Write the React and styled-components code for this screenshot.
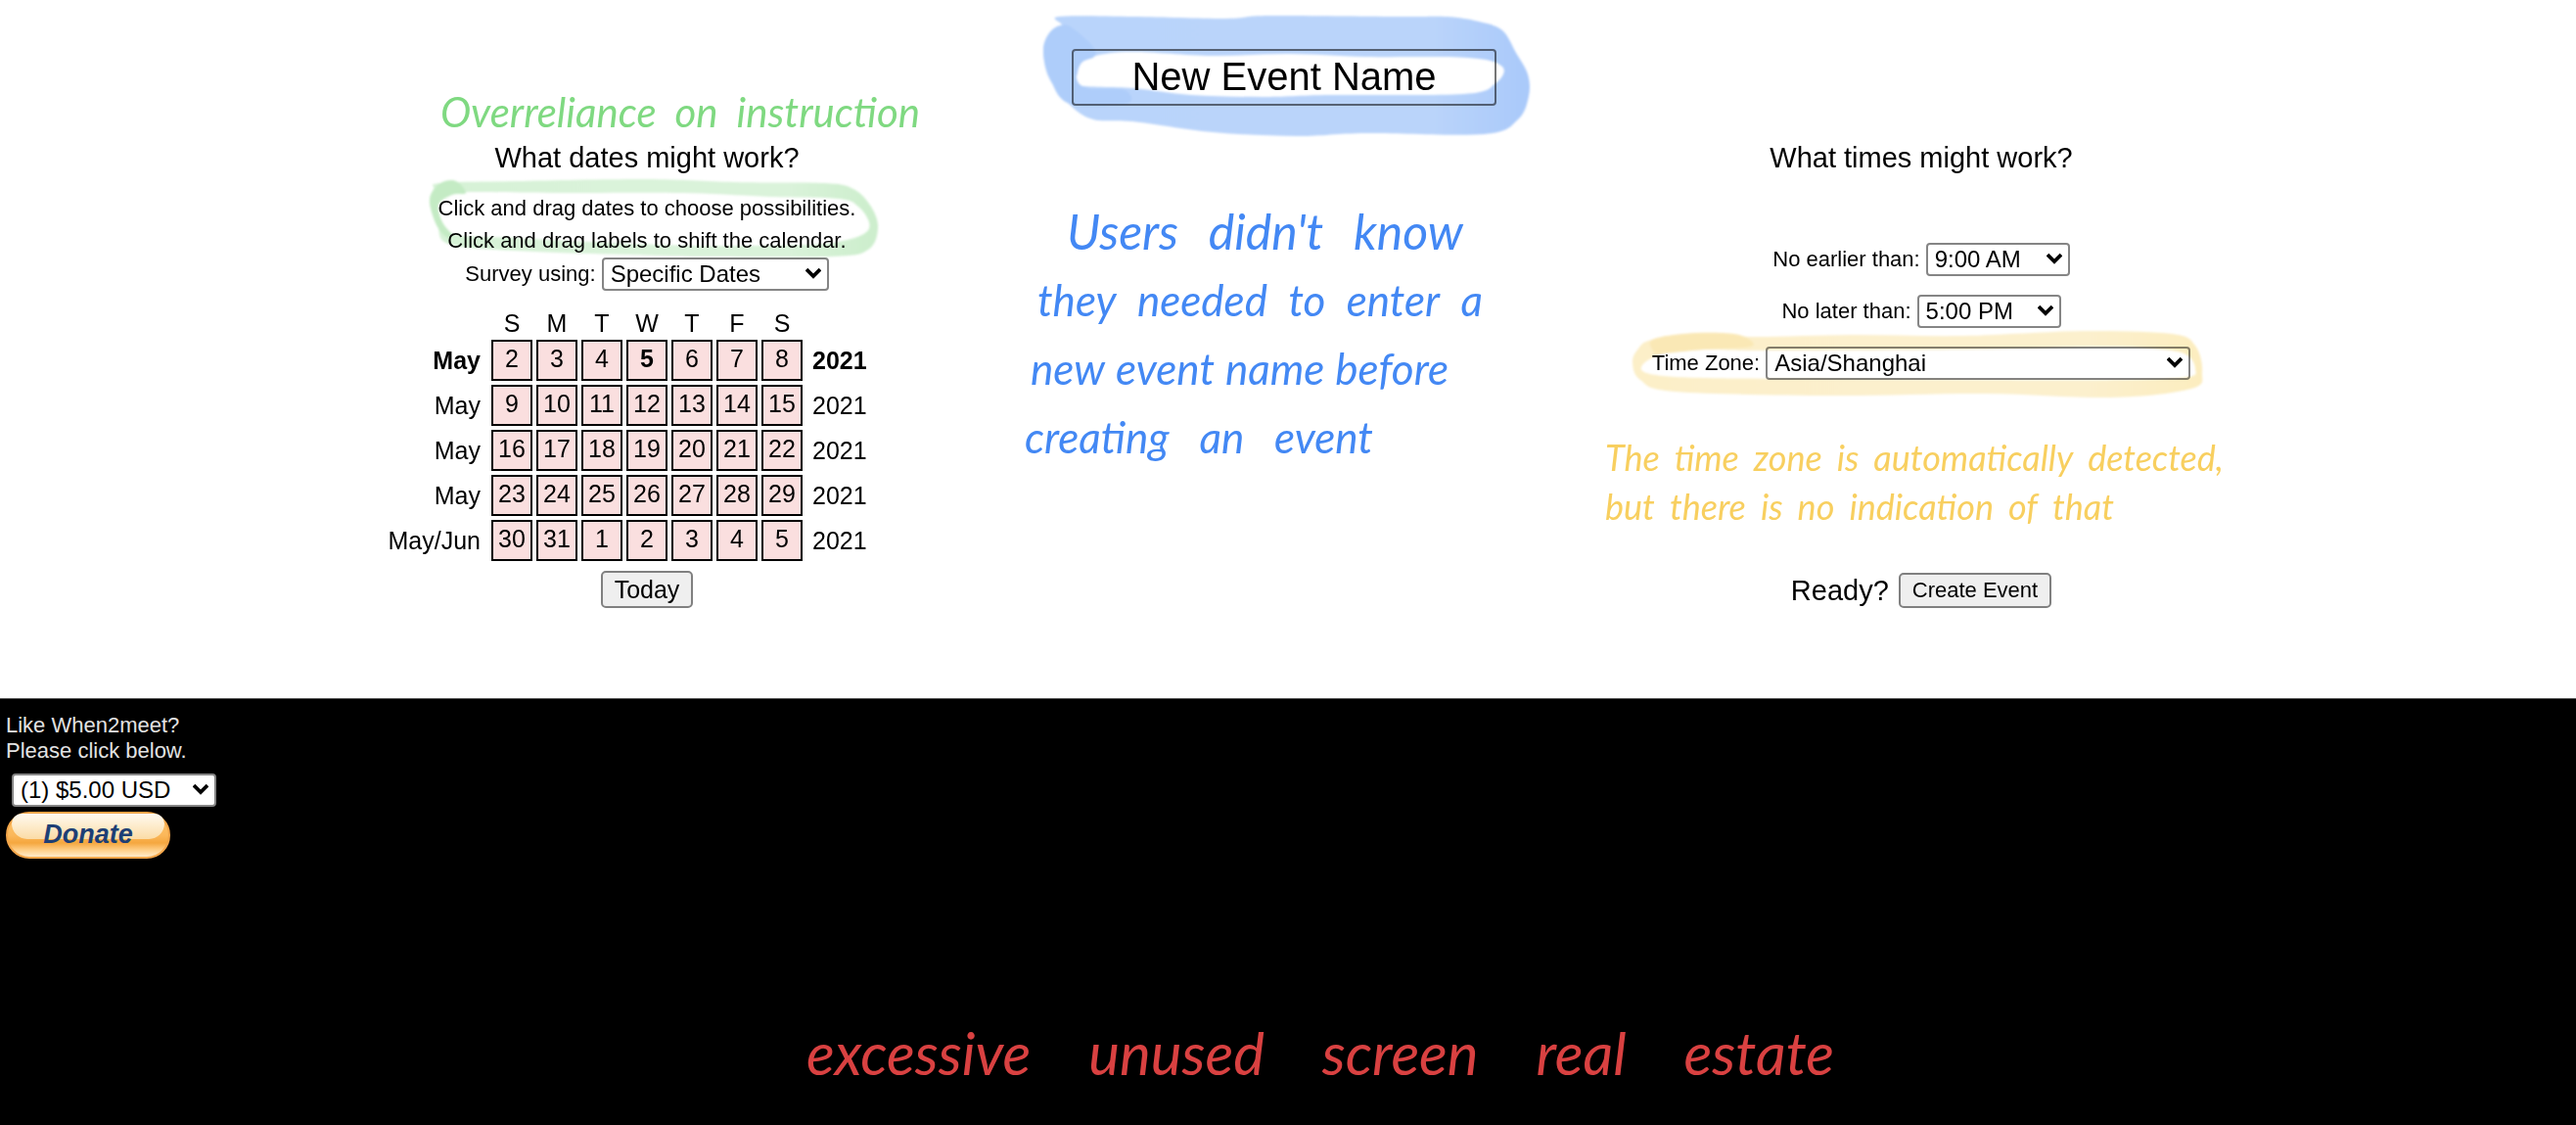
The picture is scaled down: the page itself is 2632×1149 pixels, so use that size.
import React from "react";
import styled, { createGlobalStyle } from "styled-components";

const GlobalStyle = createGlobalStyle`
  *, *::before, *::after { box-sizing: border-box; }
  body {
    margin: 0;
    background: #fff;
    color: #000;
    font-family: Arial, "Liberation Sans", sans-serif;
    font-size: 22px;
  }
`;

const Page = styled.div`
  display: flex;
  flex-direction: column;
  min-height: 100vh;
`;

const Planner = styled.main`
  position: relative;
  display: flex;
  flex-direction: column;
  align-items: center;
  padding: 50px 18px 92px 10px;
`;

const EventName = styled.input`
  width: 434px;
  height: 58px;
  padding: 0 0 2px;
  border: 2px solid #767676;
  border-radius: 4px;
  background: #fff;
  color: #000;
  font: 40px Arial, "Liberation Sans", sans-serif;
  text-align: center;
`;

const Columns = styled.div`
  display: grid;
  grid-template-columns: 1fr 1fr;
  width: 100%;
  margin-top: 36px;
`;

const Column = styled.section`
  position: relative;
  display: flex;
  flex-direction: column;
  align-items: center;
`;

const Heading = styled.h2`
  margin: 0;
  font-size: 29px;
  line-height: 34px;
  font-weight: 400;
`;

const Instructions = styled.p`
  margin: 18px 0 1px;
  line-height: 33px;
  text-align: center;
`;

const Field = styled.div`
  display: flex;
  align-items: center;
  gap: 6px;
`;

const SelectBox = styled.span`
  position: relative;
  display: inline-flex;
  width: ${(p) => p.$width}px;
`;

const NativeSelect = styled.select`
  appearance: none;
  width: 100%;
  height: 34px;
  padding: 0 28px 2px 7px;
  border: 2px solid #858585;
  border-radius: 4px;
  background: #fff;
  color: #000;
  font: 24px Arial, "Liberation Sans", sans-serif;
`;

const Chevron = styled.svg`
  position: absolute;
  right: 8px;
  top: 10px;
  width: 16px;
  height: 12px;
  pointer-events: none;
`;

const Calendar = styled.table`
  width: 542px;
  margin-top: 18px;
  table-layout: fixed;
  border-collapse: separate;
  border-spacing: 0;
  font-size: 25px;
`;

const LabelCol = styled.col`
  width: 110px;
`;

const DayCol = styled.col`
  width: 46px;
`;

const Weekday = styled.th`
  height: 30px;
  padding: 0;
  font-weight: 400;
`;

const MonthLabel = styled.th`
  padding: 0 9px 0 0;
  font-weight: ${(p) => (p.$current ? 700 : 400)};
  text-align: right;
  white-space: nowrap;
`;

const YearLabel = styled.td`
  padding: 0 0 0 8px;
  font-weight: ${(p) => (p.$current ? 700 : 400)};
`;

const DayCell = styled.td`
  height: 46px;
  padding: 2px;
`;

const Day = styled.button`
  display: block;
  width: 42px;
  height: 42px;
  padding: 0 0 4px;
  border: 2px solid #000;
  background: #fadfdf;
  color: #000;
  font: ${(p) => (p.$today ? 700 : 400)} 25px Arial, "Liberation Sans", sans-serif;
`;

const PushButton = styled.button`
  height: ${(p) => (p.$large ? 38 : 36)}px;
  padding: 0 12px;
  border: 2px solid #808080;
  border-radius: 5px;
  background: #efefef;
  color: #000;
  font: ${(p) => (p.$large ? 25 : 22)}px Arial, "Liberation Sans", sans-serif;
`;

const TodayRow = styled.div`
  margin-top: 8px;
`;

const TimeFields = styled.div`
  display: flex;
  flex-direction: column;
  align-items: center;
  gap: 19px;
  margin-top: 70px;
`;

const ReadyRow = styled.div`
  display: flex;
  align-items: center;
  gap: 10px;
  margin-top: 197px;
  font-size: 29px;
  line-height: 34px;
`;

const Footer = styled.footer`
  position: relative;
  flex: 1;
  display: flex;
  flex-direction: column;
  align-items: flex-start;
  min-height: 436px;
  padding: 14px 6px;
  border-top: 1px solid #555;
  background: #000;
`;

const Appeal = styled.label`
  margin-bottom: 10px;
  color: #e2e2e2;
  line-height: 26px;
`;

const Amount = styled.div`
  padding-left: 6px;
`;

const Donate = styled.button`
  position: relative;
  width: 168px;
  height: 48px;
  margin-top: 5px;
  padding: 0 0 2px;
  border: 2px solid #f4a64a;
  border-radius: 24px;
  background: linear-gradient(#ffc56e 0%, #fbb85a 50%, #f5a73f 68%, #ffd08a 85%, #ffeccb 100%);
  color: #1d3f75;
  font: italic 700 27px Arial, "Liberation Sans", sans-serif;
  &::before {
    content: "";
    position: absolute;
    inset: 0 4px 18px;
    border-radius: 14px 14px 22px 22px;
    background: linear-gradient(#fffaf0, #fbdca6);
  }
`;

const DonateText = styled.span`
  position: relative;
`;

const Highlight = styled.svg`
  position: absolute;
  top: ${(p) => p.$top}px;
  left: calc(50% - ${(p) => p.$back}px);
  mix-blend-mode: multiply;
  pointer-events: none;
`;

const Note = styled.div`
  position: absolute;
  top: ${(p) => p.$top}px;
  left: calc(50% - ${(p) => p.$back}px);
  color: ${(p) => p.$ink};
  font-family: Lato, "Liberation Sans", sans-serif;
  font-style: italic;
  font-size: ${(p) => p.$size}px;
  line-height: ${(p) => p.$leading}px;
  pointer-events: none;
`;

const NoteLine = styled.p`
  display: flex;
  justify-content: space-between;
  width: ${(p) => p.$width}px;
  margin: 0 0 0 ${(p) => p.$indent || 0}px;
  font-size: ${(p) => (p.$large ? "50px" : "inherit")};
  white-space: pre;
`;

// Closed smooth curve through the given points.
function loop(points) {
  const n = points.length;
  const at = (i) => points[(i + n) % n];
  let d = `M${at(0).join(",")}`;
  for (let i = 0; i < n; i += 1) {
    const [a, b, c, e] = [at(i - 1), at(i), at(i + 1), at(i + 2)];
    d += `C${b[0] + (c[0] - a[0]) / 6},${b[1] + (c[1] - a[1]) / 6} ${c[0] - (e[0] - b[0]) / 6},${c[1] - (e[1] - b[1]) / 6} ${c[0]},${c[1]}`;
  }
  return `${d}Z`;
}

const BLUE = [
  [[1083, 17], [1160, 17], [1254, 19], [1297, 16], [1433, 17], [1479, 17], [1512, 22], [1536, 31], [1550, 54], [1562, 76], [1563, 98], [1552, 122], [1518, 137], [1397, 136], [1326, 139], [1240, 135], [1158, 124], [1118, 122], [1094, 107], [1073, 80], [1067, 52], [1073, 34], [1086, 26]],
  [[1102, 75], [1106, 64], [1120, 57], [1158, 53], [1240, 57], [1318, 55], [1397, 58], [1501, 59], [1536, 68], [1529, 85], [1497, 96], [1361, 97], [1290, 99], [1218, 97], [1158, 90], [1102, 87]],
];
const BLUE_OVERLAP = [[1084, 26], [1096, 28], [1118, 48], [1119, 58], [1106, 64], [1101, 80], [1112, 90], [1150, 92], [1152, 106], [1094, 106], [1074, 80], [1067, 52], [1073, 34]];

const GREEN = [
  [[450, 187], [528, 185], [661, 183], [750, 186], [842, 187], [872, 193], [890, 211], [897, 233], [887, 255], [850, 262], [713, 262], [639, 260], [546, 257], [461, 250], [447, 230], [439, 207], [443, 193]],
  [[462, 198], [448, 208], [452, 227], [467, 240], [528, 243], [602, 247], [713, 251], [824, 250], [861, 246], [884, 238], [888, 227], [877, 211], [857, 203], [787, 201], [698, 197], [565, 197], [491, 196]],
];
const GREEN_OVERLAP = [[452, 186], [466, 185], [476, 197], [462, 199], [448, 209], [452, 227], [462, 240], [456, 242], [446, 230], [439, 207], [443, 194]];

const YELLOW = [
  [[1689, 347], [1742, 340], [1791, 344], [1893, 342], [2007, 343], [2130, 338], [2220, 341], [2244, 353], [2251, 380], [2240, 397], [2158, 406], [2028, 402], [1873, 404], [1713, 400], [1677, 388], [1669, 370], [1675, 356]],
  [[1679, 373], [1687, 382], [1742, 386], [1885, 387], [2028, 388], [2171, 388], [2236, 385], [2244, 377], [2236, 363], [2211, 357], [2150, 354], [2007, 357], [1803, 358], [1742, 357], [1701, 361]],
];
const YELLOW_OVERLAP = [[1689, 347], [1720, 341], [1760, 340], [1784, 344], [1790, 354], [1742, 357], [1698, 361], [1690, 358]];

function Marker({ id, top, back, box, shape, overlap, colors }) {
  const [x, y, w, h] = box;
  return (
    <Highlight $top={top} $back={back} width={w} height={h} viewBox={`${x} ${y} ${w} ${h}`} aria-hidden="true">
      <defs>
        <linearGradient id={id}>
          <stop offset="0" stopColor={colors[0]} />
          <stop offset="0.4" stopColor={colors[1]} />
          <stop offset="0.8" stopColor={colors[1]} />
          <stop offset="1" stopColor={colors[2]} />
        </linearGradient>
        <filter id={`${id}-soft`}>
          <feGaussianBlur stdDeviation="1" />
        </filter>
      </defs>
      <g filter={`url(#${id}-soft)`}>
        <path d={shape.map(loop).join("")} fillRule="evenodd" fill={`url(#${id})`} />
        <path d={loop(overlap)} fill={colors[3]} />
      </g>
    </Highlight>
  );
}

function Select({ id, width, options }) {
  return (
    <SelectBox $width={width}>
      <NativeSelect id={id}>
        {options.map((o) => (
          <option key={o}>{o}</option>
        ))}
      </NativeSelect>
      <Chevron viewBox="0 0 16 12" aria-hidden="true">
        <path d="M1 2 L8 9 L15 2" fill="none" stroke="#000" strokeWidth="3.8" />
      </Chevron>
    </SelectBox>
  );
}

function Words({ text, width, indent, large }) {
  const words = text.split(" ");
  return (
    <NoteLine $width={width} $indent={indent} $large={large}>
      {words.map((word, i) => (
        <span key={i}>{word}</span>
      ))}
    </NoteLine>
  );
}

const WEEKDAYS = ["S", "M", "T", "W", "T", "F", "S"];
const WEEKS = [
  { month: "May", days: [2, 3, 4, 5, 6, 7, 8], current: true },
  { month: "May", days: [9, 10, 11, 12, 13, 14, 15] },
  { month: "May", days: [16, 17, 18, 19, 20, 21, 22] },
  { month: "May", days: [23, 24, 25, 26, 27, 28, 29] },
  { month: "May/Jun", days: [30, 31, 1, 2, 3, 4, 5] },
];

export default function App() {
  return (
    <Page>
      <GlobalStyle />
      <Planner>
        <EventName aria-label="New Event Name" defaultValue="New Event Name" />
        <Marker id="blue" top={0} back={257} box={[1060, 0, 520, 150]} shape={BLUE} overlap={BLUE_OVERLAP} colors={["#b9d4fb", "#bad4fa", "#a9c9fa", "#aecdfa"]} />

        <Columns>
          <Column>
            <Heading>What dates might work?</Heading>
            <Instructions>
              Click and drag dates to choose possibilities.
              <br />
              Click and drag labels to shift the calendar.
            </Instructions>
            <Field>
              <label htmlFor="survey">Survey using:</label>
              <Select id="survey" width={232} options={["Specific Dates", "Days of the Week"]} />
            </Field>
            <Calendar>
              <colgroup>
                <LabelCol />
                {WEEKDAYS.map((_, i) => (
                  <DayCol key={i} />
                ))}
                <col />
              </colgroup>
              <thead>
                <tr>
                  <td />
                  {WEEKDAYS.map((d, i) => (
                    <Weekday key={i} scope="col">{d}</Weekday>
                  ))}
                  <td />
                </tr>
              </thead>
              <tbody>
                {WEEKS.map((week, w) => (
                  <tr key={w}>
                    <MonthLabel scope="row" $current={week.current}>{week.month}</MonthLabel>
                    {week.days.map((day) => (
                      <DayCell key={day}>
                        <Day type="button" $today={week.current && day === 5}>{day}</Day>
                      </DayCell>
                    ))}
                    <YearLabel $current={week.current}>2021</YearLabel>
                  </tr>
                ))}
              </tbody>
            </Calendar>
            <TodayRow>
              <PushButton type="button" $large>Today</PushButton>
            </TodayRow>

            <Marker id="green" top={36} back={231} box={[430, 180, 480, 90]} shape={GREEN} overlap={GREEN_OVERLAP} colors={["#d6f2d6", "#daf3da", "#cceecc", "#c4ebc4"]} />
            <Note $top={-54} $back={211} $ink="#7fd981" $size={42} $leading={48}>
              <Words text="Overreliance on instruction" width={490} />
            </Note>
          </Column>

          <Column>
            <Heading>What times might work?</Heading>
            <TimeFields>
              <Field>
                <label htmlFor="earliest">No earlier than:</label>
                <Select id="earliest" width={147} options={["9:00 AM", "10:00 AM"]} />
              </Field>
              <Field>
                <label htmlFor="latest">No later than:</label>
                <Select id="latest" width={147} options={["5:00 PM", "6:00 PM"]} />
              </Field>
              <Field>
                <label htmlFor="zone">Time Zone:</label>
                <Select id="zone" width={434} options={["Asia/Shanghai", "Asia/Tokyo"]} />
              </Field>
            </TimeFields>
            <ReadyRow>
              <span>Ready?</span>
              <PushButton type="button">Create Event</PushButton>
            </ReadyRow>

            <Marker id="yellow" top={186} back={304} box={[1660, 330, 600, 84]} shape={YELLOW} overlap={YELLOW_OVERLAP} colors={["#fcefc8", "#fcf0cd", "#fcedbf", "#fae8b5"]} />
            <Note $top={298} $back={323} $ink="#f8cf5f" $size={36} $leading={50}>
              <Words text="The time zone is automatically detected," width={632} />
              <Words text="but there is no indication of that" width={520} />
            </Note>
          </Column>
        </Columns>

        <Note $top={201} $back={269} $ink="#4388f4" $size={44} $leading={70}>
          <Words text="Users didn't know" width={405} indent={43} large />
          <Words text="they needed to enter a" width={455} indent={13} />
          <Words text="new event name before" width={427} indent={6} />
          <Words text="creating an event" width={356} />
        </Note>
      </Planner>

      <Footer>
        <Appeal htmlFor="amount">
          Like When2meet?
          <br />
          Please click below.
        </Appeal>
        <Amount>
          <Select id="amount" width={209} options={["(1) $5.00 USD", "(2) $10.00 USD"]} />
        </Amount>
        <Donate type="button">
          <DonateText>Donate</DonateText>
        </Donate>
        <Note $top={329} $back={492} $ink="#d94141" $size={60} $leading={64}>
          <Words text="excessive unused screen real estate" width={1050} />
        </Note>
      </Footer>
    </Page>
  );
}
